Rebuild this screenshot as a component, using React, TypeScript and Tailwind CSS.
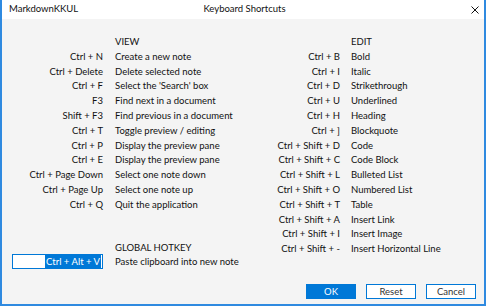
import React from 'react';

const viewRows: [string, string][] = [
  ['Ctrl + N', 'Create a new note'],
  ['Ctrl + Delete', 'Delete selected note'],
  ['Ctrl + F', "Select the 'Search' box"],
  ['F3', 'Find next in a document'],
  ['Shift + F3', 'Find previous in a document'],
  ['Ctrl + T', 'Toggle preview / editing'],
  ['Ctrl + P', 'Display the preview pane'],
  ['Ctrl + E', 'Display the preview pane'],
  ['Ctrl + Page Down', 'Select one note down'],
  ['Ctrl + Page Up', 'Select one note up'],
  ['Ctrl + Q', 'Quit the application'],
];

const editRows: [string, string][] = [
  ['Ctrl + B', 'Bold'],
  ['Ctrl + I', 'Italic'],
  ['Ctrl + D', 'Strikethrough'],
  ['Ctrl + U', 'Underlined'],
  ['Ctrl + H', 'Heading'],
  ['Ctrl + ]', 'Blockquote'],
  ['Ctrl + Shift + D', 'Code'],
  ['Ctrl + Shift + C', 'Code Block'],
  ['Ctrl + Shift + L', 'Bulleted List'],
  ['Ctrl + Shift + O', 'Numbered List'],
  ['Ctrl + Shift + T', 'Table'],
  ['Ctrl + Shift + A', 'Insert Link'],
  ['Ctrl + Shift + I', 'Insert Image'],
  ['Ctrl + Shift + -', 'Insert Horizontal Line'],
];

const Row: React.FC<{ k: string; d: string }> = ({ k, d }) => (
  <>
    <div className="h-[14.8px] leading-[14.8px] text-right whitespace-nowrap">{k}</div>
    <div className="h-[14.8px] leading-[14.8px] whitespace-nowrap">{d}</div>
  </>
);

export default function App() {
  return (
    <div
      className="w-[486px] h-[306px] flex flex-col bg-white border-l-2 border-r-2 border-b-2 border-[#2f8ae0] text-[9.5px] text-[#111]"
      style={{ fontFamily: 'Lato, "Noto Sans", sans-serif' }}
    >
      {/* title bar */}
      <div className="h-[19px] shrink-0 grid grid-cols-[1fr_auto_1fr] items-center bg-white pl-[7px] pr-[4px]">
        <div className="whitespace-nowrap">MarkdownKKUL</div>
        <div className="whitespace-nowrap">Keyboard Shortcuts</div>
        <div className="flex justify-end">
          <svg width="8" height="8" viewBox="0 0 8 8" className="mr-[1px]">
            <path d="M0.5 0.5 L7.5 7.5 M7.5 0.5 L0.5 7.5" stroke="#111" strokeWidth="1" />
          </svg>
        </div>
      </div>

      {/* client area */}
      <div className="flex-1 flex flex-col bg-[#f4f4f4] pt-[16px]">
        <div className="flex pl-[10px]">
          {/* left column */}
          <div className="w-[238px]">
            <div className="grid grid-cols-[91px_auto] gap-x-[12px]">
              <div />
              <div className="h-[14.8px] leading-[14.8px]">VIEW</div>
              {viewRows.map(([k, d]) => (
                <Row key={k + d} k={k} d={d} />
              ))}
              <div className="h-[28px]" />
              <div className="h-[28px]" />
              <div />
              <div className="h-[14px] leading-[14px]">GLOBAL HOTKEY</div>
              <div className="h-[15px] mt-[-1px] bg-white border border-[#0078d7] flex justify-end items-center pr-[1px]">
                <span className="bg-[#0078d7] text-white leading-[13px] px-[1px]">Ctrl + Alt + V</span>
              </div>
              <div className="h-[14px] leading-[14px] whitespace-nowrap">Paste clipboard into new note</div>
            </div>
          </div>

          {/* right column */}
          <div className="grid grid-cols-[90px_auto] gap-x-[11px] content-start">
            <div />
            <div className="h-[14.8px] leading-[14.8px]">EDIT</div>
            {editRows.map(([k, d]) => (
              <Row key={k + d} k={k} d={d} />
            ))}
          </div>
        </div>

        <div className="flex-1" />

        {/* buttons */}
        <div className="flex justify-end gap-[10px] pr-[8px] pb-[5px]">
          <button className="w-[50px] h-[15px] bg-[#0078d7] border border-[#0078d7] text-white leading-[13px]">OK</button>
          <button className="w-[50px] h-[15px] bg-white border border-[#0078d7] text-[#333] leading-[13px]">Reset</button>
          <button className="w-[50px] h-[15px] bg-white border border-[#0078d7] text-[#333] leading-[13px]">Cancel</button>
        </div>
      </div>
    </div>
  );
}
